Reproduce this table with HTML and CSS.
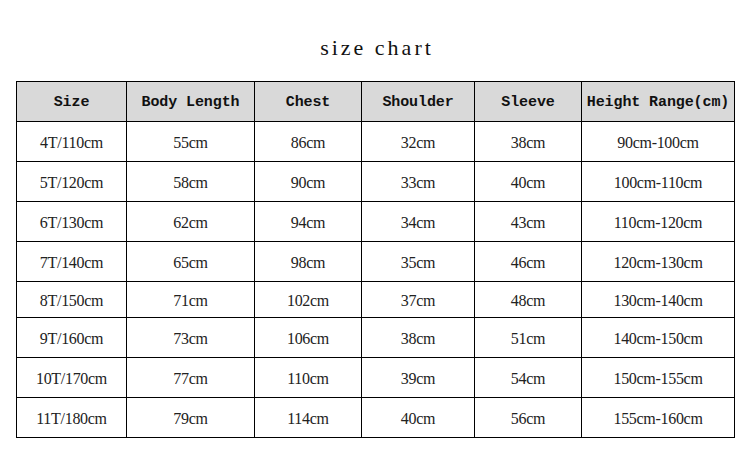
FILE: index.html
```html
<!DOCTYPE html>
<html>
<head>
<meta charset="utf-8">
<link rel="stylesheet" href="styles.css">
</head>
<body>
<div class="page">
  <h1 class="title">size chart</h1>
  <table class="chart">
    <colgroup>
      <col class="c1"><col class="c2"><col class="c3"><col class="c4"><col class="c5"><col class="c6">
    </colgroup>
    <thead>
      <tr><th>Size</th><th>Body Length</th><th>Chest</th><th>Shoulder</th><th>Sleeve</th><th>Height Range(cm)</th></tr>
    </thead>
    <tbody>
      <tr><td>4T/110cm</td><td>55cm</td><td>86cm</td><td>32cm</td><td>38cm</td><td>90cm-100cm</td></tr>
      <tr><td>5T/120cm</td><td>58cm</td><td>90cm</td><td>33cm</td><td>40cm</td><td>100cm-110cm</td></tr>
      <tr><td>6T/130cm</td><td>62cm</td><td>94cm</td><td>34cm</td><td>43cm</td><td>110cm-120cm</td></tr>
      <tr><td>7T/140cm</td><td>65cm</td><td>98cm</td><td>35cm</td><td>46cm</td><td>120cm-130cm</td></tr>
      <tr class="short"><td>8T/150cm</td><td>71cm</td><td>102cm</td><td>37cm</td><td>48cm</td><td>130cm-140cm</td></tr>
      <tr><td>9T/160cm</td><td>73cm</td><td>106cm</td><td>38cm</td><td>51cm</td><td>140cm-150cm</td></tr>
      <tr><td>10T/170cm</td><td>77cm</td><td>110cm</td><td>39cm</td><td>54cm</td><td>150cm-155cm</td></tr>
      <tr><td>11T/180cm</td><td>79cm</td><td>114cm</td><td>40cm</td><td>56cm</td><td>155cm-160cm</td></tr>
    </tbody>
  </table>
</div>
</body>
</html>
```
FILE: styles.css
```css
html, body {
  margin: 0;
  padding: 0;
  background: #ffffff;
}
.page {
  width: 750px;
  height: 453px;
  padding-top: 35px;
  box-sizing: border-box;
  font-family: "Liberation Mono", "DejaVu Sans Mono", monospace;
  color: #1a1a1a;
}
.title {
  margin: 0 0 20px 0;
  height: 26px;
  line-height: 26px;
  text-align: center;
  font-family: "Liberation Serif", "DejaVu Serif", serif;
  font-size: 22px;
  font-weight: normal;
  letter-spacing: 3px;
  padding-left: 4px;
  color: #111;
}
.chart {
  margin-left: 16px;
  border-collapse: collapse;
  table-layout: fixed;
  width: 719px;
}
.c1 { width: 110px; }
.c2 { width: 128px; }
.c3 { width: 107px; }
.c4 { width: 113px; }
.c5 { width: 107px; }
.c6 { width: 153px; }
.chart th, .chart td {
  border: 1px solid #000;
  text-align: center;
  padding: 2px 0 0 0;
  white-space: nowrap;
  overflow: hidden;
}
.chart th {
  background: #d9d9d9;
  height: 37px;
  font-size: 15px;
  font-weight: bold;
  letter-spacing: -0.1px;
  color: #111;
}
.chart td {
  height: 37px;
  font-family: "Liberation Serif", "DejaVu Serif", serif;
  font-size: 16px;
  letter-spacing: -0.3px;
  color: #222;
}
.chart tr.short td {
  height: 33px;
}
```
